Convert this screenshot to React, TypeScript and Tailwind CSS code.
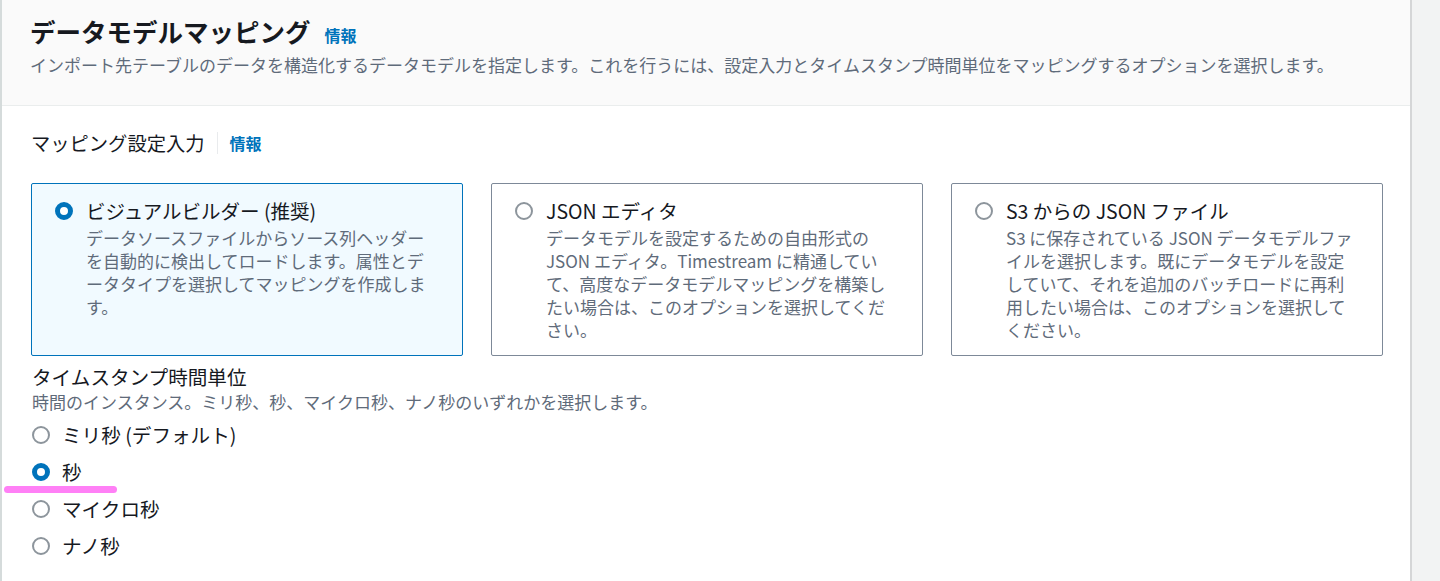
const font = { fontFamily: '"Noto Sans CJK JP", "Noto Sans", sans-serif' };

type Card = { title: string; lines: string[]; selected: boolean };

const cards: Card[] = [
  {
    title: 'ビジュアルビルダー (推奨)',
    lines: [
      'データソースファイルからソース列ヘッダー',
      'を自動的に検出してロードします。属性とデ',
      'ータタイプを選択してマッピングを作成しま',
      'す。',
    ],
    selected: true,
  },
  {
    title: 'JSON エディタ',
    lines: [
      'データモデルを設定するための自由形式の',
      'JSON エディタ。Timestream に精通してい',
      'て、高度なデータモデルマッピングを構築し',
      'たい場合は、このオプションを選択してくだ',
      'さい。',
    ],
    selected: false,
  },
  {
    title: 'S3 からの JSON ファイル',
    lines: [
      'S3 に保存されている JSON データモデルファ',
      'イルを選択します。既にデータモデルを設定',
      'していて、それを追加のバッチロードに再利',
      '用したい場合は、このオプションを選択して',
      'ください。',
    ],
    selected: false,
  },
];

const units = [
  { label: 'ミリ秒 (デフォルト)', selected: false },
  { label: '秒', selected: true },
  { label: 'マイクロ秒', selected: false },
  { label: 'ナノ秒', selected: false },
];

const Radio = ({ checked }: { checked: boolean }) =>
  checked ? (
    <span className="block w-[18px] h-[18px] rounded-full border-[5px] border-[#0073bb] bg-white shrink-0" />
  ) : (
    <span className="block w-[18px] h-[18px] rounded-full border-2 border-[#8d959c] bg-white shrink-0" />
  );

const App = () => {
  return (
    <div className="relative flex w-full h-[581px] bg-[#f2f3f3] overflow-hidden" style={font}>
      <div className="w-[2px] bg-[#d5dbdb]" />
      <div className="w-[1410px] bg-white border-r-2 border-[#d5d6d7]">
        <div className="h-[106px] bg-[#fafafa] border-b border-[#eaeded] pl-[28px] pt-[15px]">
          <div className="flex items-baseline gap-[14px]">
            <h2 className="text-[25.5px] leading-[32px] font-bold text-[#16191f]">データモデルマッピング</h2>
            <span className="text-[16px] font-bold text-[#0073bb]">情報</span>
          </div>
          <p className="mt-[6px] text-[17px] leading-[24px] text-[#5f6b7a]">
            インポート先テーブルのデータを構造化するデータモデルを指定します。これを行うには、設定入力とタイムスタンプ時間単位をマッピングするオプションを選択します。
          </p>
        </div>

        <div className="pl-[29px] pt-[24px]">
          <div className="flex items-center h-[26px]">
            <span className="text-[19.3px] leading-[26px] text-[#16191f]">マッピング設定入力</span>
            <span className="mx-[12px] w-px h-[22px] bg-[#e9ebed]" />
            <span className="text-[16px] font-bold text-[#0073bb]">情報</span>
          </div>

          <div className="grid grid-cols-3 gap-[28px] w-[1352px] mt-[27px]">
            {cards.map((c) => (
              <div
                key={c.title}
                className={
                  c.selected
                    ? 'rounded-[2px] border border-[#0073bb] bg-[#f1faff] pl-[23px] pr-[12px] pt-[14px] pb-[14px]'
                    : 'rounded-[2px] border border-[#7d8998] bg-white pl-[23px] pr-[12px] pt-[14px] pb-[14px]'
                }
              >
                <div className="flex gap-[13px]">
                  <div className="pt-[4px]">
                    <Radio checked={c.selected} />
                  </div>
                  <div>
                    <div className="text-[19.5px] leading-[26px] text-[#16191f]">{c.title}</div>
                    <div className="mt-[2px] text-[17px] leading-[23px] text-[#5f6b7a] whitespace-nowrap">
                      {c.lines.map((l) => (
                        <div key={l}>{l}</div>
                      ))}
                    </div>
                  </div>
                </div>
              </div>
            ))}
          </div>

          <div className="mt-[8px] pl-[1px]">
            <div className="text-[19.6px] leading-[26px] text-[#16191f]">タイムスタンプ時間単位</div>
            <div className="text-[17px] leading-[24px] text-[#5f6b7a]">
              時間のインスタンス。ミリ秒、秒、マイクロ秒、ナノ秒のいずれかを選択します。
            </div>
            <div className="mt-[8px] flex flex-col gap-[11px]">
              {units.map((u) => (
                <div key={u.label} className="flex items-center gap-[12px] h-[26px]">
                  <Radio checked={u.selected} />
                  <span className="text-[19.6px] leading-[26px] text-[#16191f]">{u.label}</span>
                </div>
              ))}
            </div>
          </div>
        </div>
      </div>
      <div className="flex-1" />

      <div className="absolute left-[4px] top-[486px] w-[113px] h-[7px] rounded-full bg-[#ff80f6]" />
    </div>
  );
};

export default App;
